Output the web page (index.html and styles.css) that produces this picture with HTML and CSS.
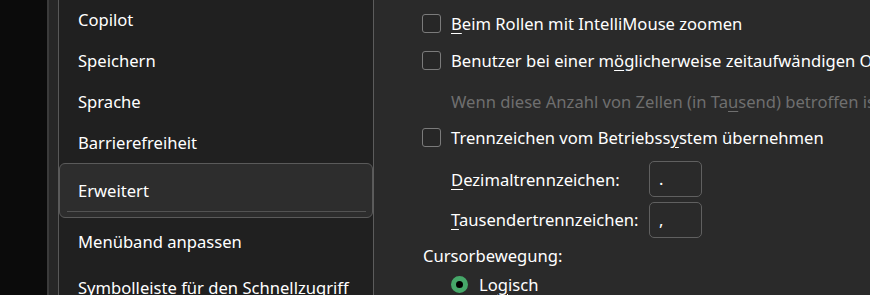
FILE: index.html
```html
<!DOCTYPE html>
<html lang="de">
<head>
    <meta charset="UTF-8">
    <title>Optionen</title>
    <link rel="stylesheet" href="styles.css">
</head>
<body>
    <div class="gutter"></div>
    <div class="rail"></div>

    <div class="nav">
        <div class="nav-item first">Copilot</div>
        <div class="nav-item">Speichern</div>
        <div class="nav-item">Sprache</div>
        <div class="nav-item">Barrierefreiheit</div>
        <div class="nav-item selected">Erweitert</div>
        <div class="nav-item after-selected">Menüband anpassen</div>
        <div class="nav-item last">Symbolleiste für den Schnellzugriff</div>
    </div>

    <div class="content">
        <div class="row row-1">
            <span class="checkbox"></span>
            <span><u>B</u>eim Rollen mit IntelliMouse zoomen</span>
        </div>
        <div class="row row-2">
            <span class="checkbox"></span>
            <span>Benutzer bei einer m<u>ö</u>glicherweise zeitaufwändigen Operation benachrichtigen</span>
        </div>
        <div class="row row-3 indent muted">
            Wenn diese Anzahl von Zellen (in Ta<u>u</u>send) betroffen ist:
        </div>
        <div class="row row-4">
            <span class="checkbox"></span>
            <span>Trennzeichen vom Betriebss<u>y</u>stem übernehmen</span>
        </div>
        <div class="row row-5 indent">
            <span class="field-label"><u>D</u>ezimaltrennzeichen:</span>
            <span class="field">.</span>
        </div>
        <div class="row row-6 indent">
            <span class="field-label"><u>T</u>ausendertrennzeichen:</span>
            <span class="field">,</span>
        </div>
        <div class="row row-7 heading">Cursorbewegung:</div>
        <div class="row row-8 indent">
            <span class="radio"></span>
            <span>Lo<u>g</u>isch</span>
        </div>
    </div>
</body>
</html>
```

FILE: styles.css
```css
body {
    margin: 0;
    height: 295px;
    overflow: hidden;
    display: flex;
    background-color: #0b0b0b;
    color: #ffffff;
    font-family: "Noto Sans", "Open Sans", sans-serif;
    font-size: 16.6px;
}
.gutter {
    width: 47px;
    flex: none;
}
.rail {
    width: 9px;
    flex: none;
    background-color: #272727;
    border-left: 2px solid #3b3b3b;
    border-right: 1px solid #595959;
}
.nav {
    width: 314px;
    flex: none;
    background-color: #202020;
    border-right: 1px solid #5c5c5c;
}
.nav-item {
    height: 41px;
    line-height: 41px;
    padding-left: 19px;
    white-space: nowrap;
}
.nav-item.first {
    margin-top: -1px;
}
.nav-item.selected {
    position: relative;
    height: 53px;
    line-height: 53px;
    padding-left: 18px;
    background-color: #2d2d2d;
    border: 1px solid #5a5a5a;
    border-radius: 6px;
}
.nav-item.selected::after {
    content: "";
    position: absolute;
    left: 7px;
    right: 6px;
    bottom: 5px;
    height: 1px;
    background-color: #535353;
}
.nav-item.after-selected {
    margin-top: 3px;
}
.nav-item.last {
    margin-top: 5px;
}
.content {
    flex: 1;
    min-width: 0;
    overflow: hidden;
    background-color: #2a2a2a;
    padding: 5px 0 0 48px;
}
.row {
    display: flex;
    align-items: center;
    white-space: nowrap;
}
.row u {
    text-underline-offset: 3px;
}
.row-1 { height: 37px; }
.row-2 { height: 36px; }
.row-3 { height: 46px; }
.row-4 { height: 27px; }
.row-5 { height: 36px; margin-top: 10px; }
.row-6 { height: 35px; margin-top: 5px; }
.row-7 { height: 37px; }
.row-8 { height: 20px; }
.indent {
    padding-left: 29px;
}
.muted {
    color: #6f6f6f;
}
.heading {
    padding-left: 1px;
}
.checkbox {
    width: 17px;
    height: 17px;
    flex: none;
    margin-right: 10px;
    border: 1px solid #7b7b7b;
    border-radius: 3px;
    background-color: #272727;
}
.field-label {
    width: 198px;
    flex: none;
}
.field {
    width: 42px;
    height: 34px;
    line-height: 34px;
    flex: none;
    padding-left: 9px;
    border: 1px solid #606060;
    border-radius: 5px;
}
.radio {
    width: 7px;
    height: 7px;
    flex: none;
    margin-right: 11px;
    border: 5px solid #46a769;
    border-radius: 50%;
    background-color: #000000;
}
```
